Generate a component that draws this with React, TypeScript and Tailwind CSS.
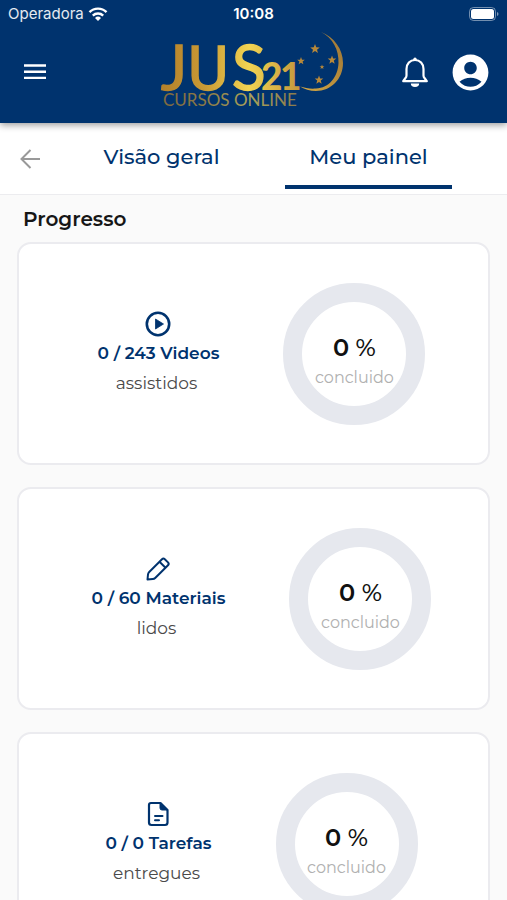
import type { ReactNode } from "react";
import { MdAccountCircle } from "react-icons/md";

type ProgressItem = {
  id: string;
  title: string;
  caption: string;
  percent: number;
  icon: ReactNode;
};

const items: ProgressItem[] = [
  { id: "videos", title: "0 / 243 Videos", caption: "assistidos", percent: 0, icon: <PlayIcon /> },
  { id: "materials", title: "0 / 60 Materiais", caption: "lidos", percent: 0, icon: <PencilIcon /> },
  { id: "tasks", title: "0 / 0 Tarefas", caption: "entregues", percent: 0, icon: <FileIcon /> },
];

function BellIcon() {
  return (
    <svg width="28" height="30" viewBox="0 0 28 30" aria-hidden="true">
      <path
        d="M14 3C9 3 5.500 6.800 5.500 12v6.500c0 1-.4 1.800-1 2.500L2.200 24.200h23.600L23.500 21c-.6-.7-1-1.500-1-2.500V12C22.500 6.800 19 3 14 3z"
        fill="none"
        stroke="currentColor"
        strokeWidth="2.2"
        strokeLinejoin="round"
      />
      <circle cx="14" cy="2.200" r="1.700" fill="currentColor" />
      <path d="M9.800 26.500h8.400a4.200 3.400 0 0 1-8.400 0z" fill="currentColor" />
    </svg>
  );
}

function PlayIcon() {
  return (
    <svg width="26" height="26" viewBox="0 0 26 26" aria-hidden="true">
      <circle cx="13" cy="13" r="11.2" fill="none" stroke="currentColor" strokeWidth="2.6" />
      <path d="M10.500 8v10l8-5z" fill="currentColor" stroke="currentColor" strokeWidth="0.8" strokeLinejoin="round" />
    </svg>
  );
}

function PencilIcon() {
  return (
    <svg
      width="26"
      height="26"
      viewBox="0 0 26 26"
      fill="none"
      stroke="currentColor"
      strokeWidth="2"
      strokeLinejoin="round"
      aria-hidden="true"
    >
      <path d="M2.500 23.500L3 18.500Q3.200 17 4.200 16L17 3.200a2 2 0 0 1 2.800 0L23 6.400a2 2 0 0 1 0 2.800L10.200 22Q9.200 23 7.800 23.100z" />
      <path d="M14.500 5.800l6 6" />
    </svg>
  );
}

function FileIcon() {
  return (
    <svg width="26" height="26" viewBox="0 0 26 26" fill="none" stroke="currentColor" aria-hidden="true">
      <path
        d="M6 2h9.500L22.500 9V21.500A2.500 2.500 0 0 1 20 24H6.500A2.500 2.500 0 0 1 4 21.500V4A2 2 0 0 1 6 2z"
        strokeWidth="2.2"
        strokeLinejoin="round"
      />
      <path d="M15 2v5a2 2 0 0 0 2 2h5z" fill="currentColor" strokeWidth="1" />
      <path d="M10 15h7.500M10 19.200h4" strokeWidth="2" strokeLinecap="round" />
    </svg>
  );
}

function Star({ x, y, r }: { x: number; y: number; r: number }) {
  return (
    <path
      transform={`translate(${x} ${y}) scale(${r})`}
      d="M0-1 .25-.33.95-.31.4.13.59.81 0 .42-.59.81-.4.13-.95-.31-.25-.33z"
      fill="#b8893a"
    />
  );
}

function Logo() {
  return (
    <svg className="h-[88px] w-[185px]" viewBox="160 28 185 88" role="img" aria-label="JUS21 Cursos Online">
      <defs>
        <linearGradient id="gold" gradientUnits="userSpaceOnUse" x1="163" y1="0" x2="300" y2="0">
          <stop offset="0" stopColor="#b5822b" />
          <stop offset="0.3" stopColor="#c99a35" />
          <stop offset="0.62" stopColor="#f2d452" />
          <stop offset="1" stopColor="#c2943c" />
        </linearGradient>
        <linearGradient id="arc" x1="0" y1="1" x2="1" y2="0">
          <stop offset="0" stopColor="#d5a944" />
          <stop offset="1" stopColor="#9c7436" />
        </linearGradient>
      </defs>
      <g fill="url(#gold)" fontFamily="Lato, sans-serif">
        <text y="90" fontSize="62" stroke="url(#gold)" strokeWidth="1.5">
          <tspan x="160">J</tspan>
          <tspan x="187" fontFamily="Roboto, sans-serif">U</tspan>
          <tspan x="231">S</tspan>
        </text>
        <text x="260 279" y="90" fontSize="37" fontWeight="900">21</text>
        <text x="162" y="106" fontSize="17" fontWeight="400" opacity="0.7">CURSOS ONLINE</text>
      </g>
      <path
        d="M320 32C333 37 342 49 342 63C342 79 330 91 315 91C309 91 303 89 299 86.500C304 88 309 89 315 88.500C328 88 337 77 337.500 63C338 50 332 38 320 32z"
        fill="url(#arc)"
      />
      <Star x={314} y={49} r={5} />
      <Star x={300} y={61} r={4} />
      <Star x={331} y={60} r={4.5} />
      <Star x={321} y={67} r={2.5} />
      <Star x={318} y={80} r={4.5} />
    </svg>
  );
}

function StatusBar() {
  return (
    <div className="grid h-7 grid-cols-3 items-center px-2 font-['Inter',sans-serif] text-[15px]">
      <div className="flex items-center gap-1 text-white/90">
        Operadora
        <svg width="20" height="16" viewBox="0 0 20 16" fill="none" stroke="white" strokeWidth="2.4" aria-label="Wi-Fi">
          <path d="M1.500 6.200a12 12 0 0 1 17 0M4.800 9.600a7.500 7.500 0 0 1 10.400 0" />
          <path d="M10 15l-3-3a4.300 4.300 0 0 1 6 0z" fill="white" stroke="none" />
        </svg>
      </div>
      <time className="text-center font-semibold">10:08</time>
      <svg className="justify-self-end" width="30" height="14" viewBox="0 0 30 14" aria-label="Bateria">
        <rect x="0.500" y="0.500" width="26" height="13" rx="4" fill="none" stroke="white" strokeOpacity="0.45" />
        <rect x="2" y="2" width="23" height="10" rx="2.500" fill="white" />
        <path d="M28 5v4q1.500-.6 1.500-2T28 5z" fill="white" fillOpacity="0.5" />
      </svg>
    </div>
  );
}

function Header() {
  return (
    <header className="relative z-10 h-[123px] bg-[#00336e] text-white shadow-[0_2px_7px_rgba(0,0,0,0.4)]">
      <StatusBar />
      <div className="grid grid-cols-[1fr_auto_1fr] items-center px-[15px]">
        <button type="button" aria-label="Abrir menu" className="flex h-10 w-10 items-center justify-center">
          <svg width="24" height="18" viewBox="0 0 24 18" stroke="currentColor" strokeWidth="2.4" aria-hidden="true">
            <path d="M1 2.500h22M1 8.700h22M1 14.900h22" />
          </svg>
        </button>
        <Logo />
        <div className="flex items-center justify-end gap-5">
          <button type="button" aria-label="Notificações">
            <BellIcon />
          </button>
          <button type="button" aria-label="Minha conta">
            <MdAccountCircle size={43} />
          </button>
        </div>
      </div>
    </header>
  );
}

function Tabs() {
  return (
    <nav className="flex h-18 items-stretch border-b border-[#ececef] bg-white pr-[55px] text-[21px] font-medium text-[#00336e]">
      <button type="button" aria-label="Voltar" className="flex w-[78px] shrink-0 items-center pl-5 text-[#999999]">
        <svg width="20" height="20" viewBox="0 0 20 20" fill="none" stroke="currentColor" strokeWidth="2" aria-hidden="true">
          <path d="M20 10H2M10.500 1L1.500 10l9 9" />
        </svg>
      </button>
      <div role="tablist" className="grid flex-1 grid-cols-2 gap-10 pb-[5px]">
        <button type="button" role="tab" aria-selected="false" className="border-b-4 border-transparent pt-[6px]">
          Visão geral
        </button>
        <button type="button" role="tab" aria-selected="true" className="border-b-4 border-[#00336e] pt-[6px]">
          Meu painel
        </button>
      </div>
    </nav>
  );
}

function ProgressCard({ item }: { item: ProgressItem }) {
  return (
    <li className="flex h-[223px] items-center justify-center gap-16 rounded-[14px] border-2 border-[#ebebef] bg-white pl-4">
      <div className="flex flex-col items-center">
        <span className="text-[#00336e]">{item.icon}</span>
        <h2 className="mt-1 text-[17px] leading-6 font-semibold text-[#00336e]">{item.title}</h2>
        <p className="mt-1 pr-1 text-[17px] leading-7 text-[#4a4a4a]">{item.caption}</p>
      </div>
      <div className="flex h-[142px] w-[142px] flex-col items-center justify-center rounded-full border-[19px] border-[#e6e8ee] pt-4">
        <p className="text-[24px] leading-8 font-medium text-[#111111]">
          <span className="font-semibold">{item.percent}</span> %
        </p>
        <p className="text-[16px] leading-7 text-[#b0b0b0]">concluido</p>
      </div>
    </li>
  );
}

export default function App() {
  return (
    <div className="h-screen overflow-hidden bg-[#fafafa] font-['Montserrat','Inter',sans-serif]">
      <Header />
      <Tabs />
      <main className="px-[17px] pt-2">
        <h1 className="px-[6px] text-[20px] leading-8 font-semibold text-[#161616]">Progresso</h1>
        <ul className="mt-[7px] flex flex-col gap-[22px]">
          {items.map((item) => (
            <ProgressCard key={item.id} item={item} />
          ))}
        </ul>
      </main>
    </div>
  );
}
